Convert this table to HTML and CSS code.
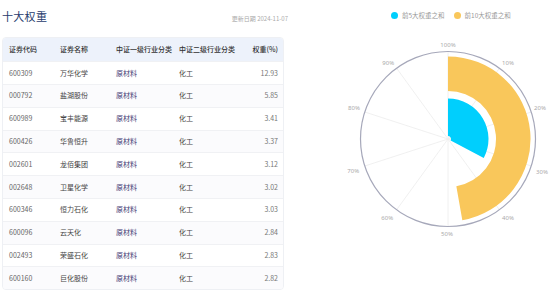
FILE: index.html
```html
<!DOCTYPE html>
<html lang="zh">
<head>
<meta charset="utf-8">
<link rel="stylesheet" href="styles.css">
</head>
<body>
<div class="page">
  <section class="left">
    <div class="head">
      <h1 class="title">十大权重</h1>
      <span class="date">更新日期 2024-11-07</span>
    </div>
    <div class="table">
      <div class="row hdr">
        <span>证券代码</span><span>证券名称</span><span>中证一级行业分类</span><span>中证二级行业分类</span><span class="num">权重(%)</span>
      </div>
      <div class="row"><span class="code">600309</span><span class="name">万华化学</span><span class="ind">原材料</span><span class="ind2">化工</span><span class="num">12.93</span></div>
      <div class="row"><span class="code">000792</span><span class="name">盐湖股份</span><span class="ind">原材料</span><span class="ind2">化工</span><span class="num">5.85</span></div>
      <div class="row"><span class="code">600989</span><span class="name">宝丰能源</span><span class="ind">原材料</span><span class="ind2">化工</span><span class="num">3.41</span></div>
      <div class="row"><span class="code">600426</span><span class="name">华鲁恒升</span><span class="ind">原材料</span><span class="ind2">化工</span><span class="num">3.37</span></div>
      <div class="row"><span class="code">002601</span><span class="name">龙佰集团</span><span class="ind">原材料</span><span class="ind2">化工</span><span class="num">3.12</span></div>
      <div class="row"><span class="code">002648</span><span class="name">卫星化学</span><span class="ind">原材料</span><span class="ind2">化工</span><span class="num">3.02</span></div>
      <div class="row"><span class="code">600346</span><span class="name">恒力石化</span><span class="ind">原材料</span><span class="ind2">化工</span><span class="num">3.03</span></div>
      <div class="row"><span class="code">600096</span><span class="name">云天化</span><span class="ind">原材料</span><span class="ind2">化工</span><span class="num">2.84</span></div>
      <div class="row"><span class="code">002493</span><span class="name">荣盛石化</span><span class="ind">原材料</span><span class="ind2">化工</span><span class="num">2.83</span></div>
      <div class="row"><span class="code">600160</span><span class="name">巨化股份</span><span class="ind">原材料</span><span class="ind2">化工</span><span class="num">2.82</span></div>
    </div>
  </section>
  <section class="right">
    <div class="legend">
      <span class="item"><i class="dot cyan"></i>前5大权重之和</span>
      <span class="item"><i class="dot yellow"></i>前10大权重之和</span>
    </div>
    <svg class="chart" width="260" height="267" viewBox="0 0 260 267">
      <g stroke="#ececec" stroke-width="0.8">
        <line x1="158" y1="109" x2="158" y2="21.5"/>
        <line x1="158" y1="109" x2="209.4" y2="38.2"/>
        <line x1="158" y1="109" x2="241.2" y2="82"/>
        <line x1="158" y1="109" x2="241.2" y2="136"/>
        <line x1="158" y1="109" x2="209.4" y2="179.8"/>
        <line x1="158" y1="109" x2="158" y2="196.5"/>
        <line x1="158" y1="109" x2="106.6" y2="179.8"/>
        <line x1="158" y1="109" x2="74.8" y2="136"/>
        <line x1="158" y1="109" x2="74.8" y2="82"/>
        <line x1="158" y1="109" x2="106.6" y2="38.2"/>
      </g>
      <circle cx="158" cy="109" r="87.5" fill="none" stroke="#a6a8ba" stroke-width="1.2"/>
      <path d="M158,26.5 A82.5,82.5 0 0 1 172.33,190.25 L166.34,156.27 A48,48 0 0 0 158,61 Z" fill="#f9c75b"/>
      <path d="M158,68.5 A40.5,40.5 0 0 1 193.76,128.01 L160.65,110.41 A3,3 0 0 0 158,106 Z" fill="#00cffd"/>
      <g class="lbl" text-anchor="middle" dominant-baseline="central">
        <text x="158" y="15">100%</text>
        <text x="218" y="32.7">10%</text>
        <text x="250" y="78">20%</text>
        <text x="252" y="142">30%</text>
        <text x="218" y="188">40%</text>
        <text x="157" y="204">50%</text>
        <text x="97.3" y="187.7">60%</text>
        <text x="63.3" y="141">70%</text>
        <text x="64" y="78.3">80%</text>
        <text x="98.3" y="32.7">90%</text>
      </g>
    </svg>
  </section>
</div>
</body>
</html>
```

FILE: styles.css
```css
* { box-sizing: border-box; margin: 0; padding: 0; }
html, body { width: 550px; height: 297px; background: #fff; overflow: hidden; }
body { font-family: "Noto Sans CJK SC", "Noto Sans", sans-serif; color: #333; }

.page { display: flex; width: 550px; height: 297px; }

.left { width: 290px; padding: 0 4px 0 2px; display: flex; flex-direction: column; }

.head {
  height: 36.7px;
  display: flex;
  align-items: baseline;
  justify-content: space-between;
  padding-top: 10px;
}
.title { font-size: 11px; font-weight: 400; line-height: 13px; color: #1f3b6d; letter-spacing: 0.3px; }
.date { font-size: 6px; color: #aaa; line-height: 13px; margin-right: -2px; }

.table {
  width: 282px;
  border: 1px solid #eef0f4;
  border-radius: 4px;
  overflow: hidden;
}
.row {
  display: grid;
  grid-template-columns: 51px 56px 63px 1fr auto;
  padding: 0 5px 0 6px;
  height: 22.8px;
  align-items: center;
  font-size: 7px;
  line-height: 1;
  white-space: nowrap;
  border-top: 1px solid #f0f1f4;
}
.row:nth-child(odd):not(.hdr) { background: #fbfbfd; }
.row.hdr {
  height: 23.5px;
  border-top: none;
  background: #edf2fb;
  color: #333;
  font-weight: 500;
}
.num { text-align: right; }
.code { color: #666; }
.name { color: #444; }
.ind { color: #3f3a75; }
.ind2 { color: #444; }
.row:not(.hdr) .num { color: #777; }

.right { flex: 1; display: flex; flex-direction: column; }
.legend {
  height: 30px;
  display: flex;
  align-items: center;
  gap: 9px;
  padding-left: 101px;
}
.item { display: flex; align-items: center; gap: 4px; font-size: 6.5px; color: #999; }
.dot { display: block; width: 7px; height: 7px; border-radius: 50%; }
.cyan { background: #00cffd; }
.yellow { background: #f9c75b; }
.chart { display: block; }
.lbl text { font-size: 6px; fill: #aaa; font-family: "Noto Sans", sans-serif; }
```
